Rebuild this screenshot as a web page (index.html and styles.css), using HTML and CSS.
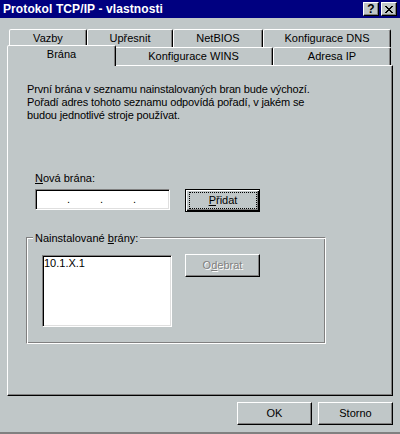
FILE: index.html
```html
<!DOCTYPE html>
<html>
<head>
<meta charset="utf-8">
<link rel="stylesheet" href="styles.css">
</head>
<body>
<div class="window">
  <div class="titlebar">
    <span class="title">Protokol TCP/IP - vlastnosti</span>
    <div class="caption-btns">
      <span class="cbtn help">?</span>
      <span class="cbtn close"><svg width="8" height="7" viewBox="0 0 8 7" shape-rendering="crispEdges"><path d="M0 0h2v1h-2z M6 0h2v1h-2z M1 1h2v1h-2z M5 1h2v1h-2z M2 2h4v1h-4z M3 3h2v1h-2z M2 4h4v1h-4z M1 5h2v1h-2z M5 5h2v1h-2z M0 6h2v1h-2z M6 6h2v1h-2z" fill="#000"/></svg></span>
    </div>
  </div>
  <div class="sheet">
    <div class="tabrow">
      <div class="tab w-vazby">Vazby</div>
      <div class="tab w-upresnit">Upřesnit</div>
      <div class="tab w-netbios">NetBIOS</div>
      <div class="tab w-dns">Konfigurace DNS</div>
    </div>
    <div class="tabrow">
      <div class="tab sel w-brana">Brána</div>
      <div class="tab w-wins">Konfigurace WINS</div>
      <div class="tab w-ip">Adresa IP</div>
    </div>
    <div class="panel">
      <p class="desc">První brána v seznamu nainstalovaných bran bude výchozí.<br>Pořadí adres tohoto seznamu odpovídá pořadí, v jakém se<br>budou jednotlivé stroje používat.</p>
      <div class="field-label"><u>N</u>ová brána:</div>
      <div class="ip-row">
        <div class="ipbox">
          <span class="seg seg-first"></span><span class="dot">.</span>
          <span class="seg"></span><span class="dot">.</span>
          <span class="seg"></span><span class="dot">.</span>
        </div>
        <button class="btn default pridat"><span class="focus"><u>P</u>řidat</span></button>
      </div>
      <div class="group">
        <div class="legend">Nainstalované <u>b</u>rány:</div>
        <div class="list-row">
          <div class="listbox">10.1.X.1</div>
          <button class="btn disabled odebrat">O<u>d</u>ebrat</button>
        </div>
      </div>
    </div>
  </div>
  <div class="footer">
    <button class="btn">OK</button>
    <button class="btn">Storno</button>
  </div>
</div>
</body>
</html>
```
FILE: styles.css
```css
* { box-sizing: border-box; }
body {
  margin: 0;
  font-family: "Liberation Sans", Arial, sans-serif;
  font-size: 11px;
  color: #000;
}
.window {
  width: 400px;
  height: 434px;
  background: #c0c7c8;
  display: flex;
  flex-direction: column;
  border-bottom: 2px solid #808080;
}
.titlebar {
  height: 18px;
  flex-shrink: 0;
  background: #000080;
  display: flex;
  align-items: center;
  justify-content: space-between;
  padding: 0 3px 0 3px;
}
.title {
  color: #fff;
  font-weight: bold;
  font-size: 12px;
  line-height: 18px;
  white-space: nowrap;
  letter-spacing: 0.1px;
}
.caption-btns { display: flex; gap: 2px; }
.cbtn {
  width: 16px;
  height: 14px;
  background: #c0c7c8;
  border: 1px solid;
  border-color: #fff #000 #000 #fff;
  box-shadow: inset -1px -1px #808080;
  display: flex;
  align-items: center;
  justify-content: center;
}
.help { font-weight: bold; font-size: 12px; line-height: 12px; }
.sheet { margin: 11px 0 0 7px; width: 386px; }
.tabrow { display: flex; height: 18px; margin-left: 2px; }
.tab {
  height: 18px;
  border: 1px solid;
  border-bottom: 0;
  border-color: #fff #000 transparent #fff;
  border-radius: 2px 2px 0 0;
  box-shadow: inset -1px 0 #808080;
  background: #c0c7c8;
  text-align: center;
  padding-top: 2px;
  line-height: 13px;
  white-space: nowrap;
}
.tab.sel {
  height: 21px;
  margin: -2px -2px 0 -2px;
  position: relative;
  z-index: 1;
}
.w-vazby { width: 78px; }
.w-upresnit { width: 86px; }
.w-netbios { width: 90px; }
.w-dns { width: 128px; }
.w-brana { width: 109px; }
.w-wins { width: 159px; }
.w-ip { width: 118px; }
.panel {
  height: 331px;
  border: 1px solid;
  border-color: #fff #000 #000 #fff;
  box-shadow: inset -1px -1px #808080;
  padding: 17px 0 0 18px;
}
.desc { margin: 0 0 0 1px; line-height: 13px; white-space: nowrap; letter-spacing: -0.15px; }
.field-label { margin: 50px 0 0 9px; line-height: 13px; }
.ip-row { display: flex; align-items: flex-start; margin: 4px 0 0 9px; }
.ipbox {
  width: 135px;
  height: 21px;
  background: #fff;
  border: 1px solid;
  border-color: #808080 #fff #fff #808080;
  box-shadow: inset 1px 1px #000, inset -1px -1px #dfdfdf;
  display: flex;
  align-items: center;
  line-height: 13px;
}
.seg { width: 30px; }
.seg-first { width: 31px; }
.dot { width: 3px; text-align: center; }
.btn {
  width: 75px;
  height: 23px;
  padding: 0;
  margin: 0;
  font-family: inherit;
  font-size: 11px;
  color: #000;
  background: #c0c7c8;
  border: 1px solid;
  border-color: #fff #000 #000 #fff;
  box-shadow: inset -1px -1px #808080;
  display: flex;
  align-items: center;
  justify-content: center;
  line-height: 13px;
}
.btn.default {
  border-color: #000;
  box-shadow: inset 1px 1px #fff, inset -1px -1px #000, inset -2px -2px #808080;
  align-items: stretch;
}
.focus {
  flex: 1;
  margin: 2px 2px 2px 3px;
  border: 1px dotted #000;
  display: flex;
  align-items: center;
  justify-content: center;
}
.pridat { margin-left: 15px; }
.btn.disabled { color: #808080; text-shadow: 1px 1px #fff; }
.group {
  margin-top: 25px;
  width: 300px;
  border: 1px solid;
  border-color: #808080 #fff #fff #808080;
  box-shadow: inset 1px 1px #fff, inset -1px -1px #808080;
  padding: 0 0 16px 0;
}
.legend {
  margin: -6px 0 0 6px;
  padding: 0 2px;
  background: #c0c7c8;
  width: fit-content;
  line-height: 13px;
}
.list-row { display: flex; align-items: flex-start; margin: 9px 0 0 15px; }
.listbox {
  width: 130px;
  height: 72px;
  margin-top: 1px;
  background: #fff;
  border: 1px solid;
  border-color: #808080 #fff #fff #808080;
  box-shadow: inset 1px 1px #000, inset -1px -1px #dfdfdf;
  padding: 1px 0 0 1px;
  line-height: 12px;
}
.odebrat { margin-left: 13px; }
.footer {
  display: flex;
  justify-content: flex-end;
  gap: 6px;
  margin-top: 6px;
  padding-right: 7px;
}
```
